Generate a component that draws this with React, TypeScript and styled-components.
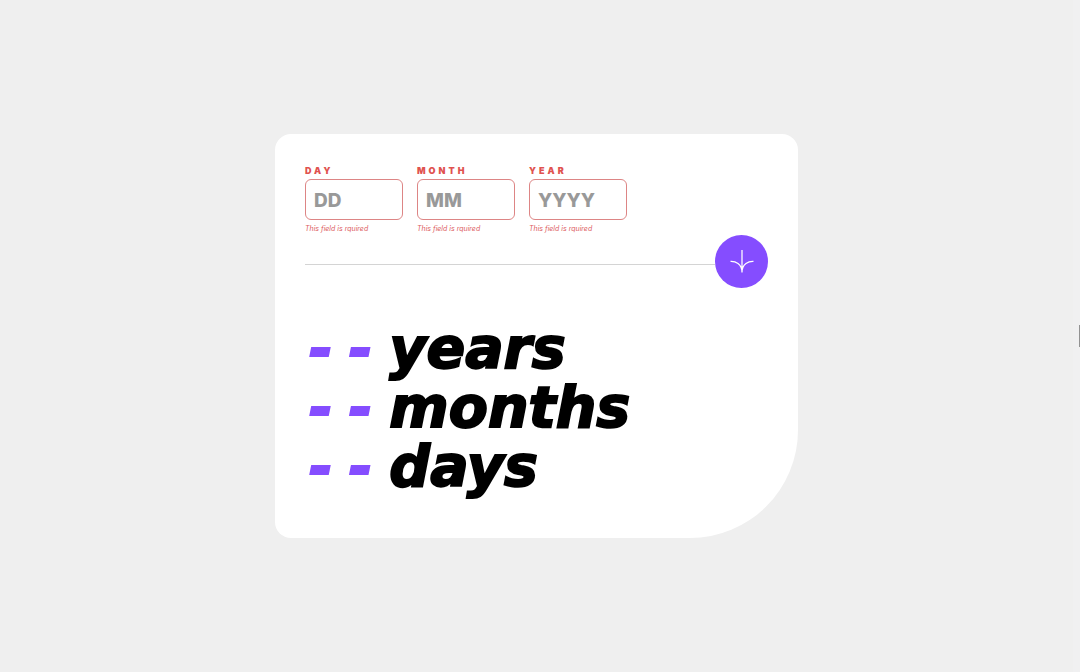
import React from "react";
import styled, { createGlobalStyle } from "styled-components";

const GlobalStyle = createGlobalStyle`
  *, *::before, *::after { box-sizing: border-box; }
  body { margin: 0; background: #efefef; }
`;

const sans = `Inter, "Liberation Sans", sans-serif`;
const display = `"DejaVu Sans", "Arial Black", sans-serif`;

const Page = styled.main`
  display: flex;
  min-height: 100vh;
  align-items: center;
  font-family: ${sans};
`;

const Stage = styled.div`
  flex: 1;
  display: flex;
  justify-content: center;
`;

const SideRail = styled.aside`
  align-self: stretch;
  width: 7px;
  display: flex;
  align-items: center;
  justify-content: flex-end;
  background: #f0f0f1;
`;

const RailHandle = styled.span`
  width: 1px;
  height: 22px;
  background: #929292;
`;

const Card = styled.section`
  width: 523px;
  max-width: 100%;
  padding: 30px 30px 42px;
  background: #fff;
  border-radius: 16px 16px 108px 16px;
`;

const Fields = styled.div`
  display: flex;
  gap: 14px;
`;

const Field = styled.div`
  display: flex;
  flex-direction: column;
  width: 98px;
`;

const Label = styled.label`
  margin-bottom: 2px;
  font: 900 9px/13px ${sans};
  letter-spacing: 3px;
  color: #e0524f;
`;

const Input = styled.input`
  width: 100%;
  height: 41px;
  padding: 2px 8px 0;
  border: 1px solid #dd8585;
  border-radius: 6px;
  background: #fff;
  font: 800 19px/24px ${sans};
  color: #000;
  outline: none;
  &::placeholder { color: #999; opacity: 1; }
`;

const ErrorText = styled.small`
  margin-top: 4px;
  font: italic 7px/10px ${sans};
  color: #dc5a5e;
`;

const Divider = styled.div`
  display: flex;
  align-items: center;
  margin-top: 1px;
`;

const Line = styled.hr`
  flex: 1;
  margin: 6px 0 0;
  border: 0;
  border-top: 1px solid #d4d4d4;
`;

const Submit = styled.button`
  display: grid;
  place-items: center;
  width: 53px;
  height: 53px;
  padding: 0;
  border: 0;
  border-radius: 50%;
  background: #854dff;
  cursor: pointer;
`;

const Results = styled.div`
  margin-top: 31px;
`;

const Result = styled.p`
  display: flex;
  gap: 17px;
  margin: 0;
  font: italic 700 57px/59px ${display};
  color: #000;
  -webkit-text-stroke: 2px currentColor;
`;

const Value = styled.span`
  display: flex;
  gap: 16px;
  padding-left: 4px;
  color: #854dff;
`;

const fields = [
  { id: "day", label: "DAY", hint: "DD" },
  { id: "month", label: "MONTH", hint: "MM" },
  { id: "year", label: "YEAR", hint: "YYYY" },
];

export default function App() {
  return (
    <Page>
      <GlobalStyle />
      <Stage>
        <Card>
          <Fields>
            {fields.map((f) => (
              <Field key={f.id}>
                <Label htmlFor={f.id}>{f.label}</Label>
                <Input id={f.id} placeholder={f.hint} aria-describedby={`${f.id}-error`} />
                <ErrorText id={`${f.id}-error`}>This field is rquired</ErrorText>
              </Field>
            ))}
          </Fields>
          <Divider>
            <Line />
            <Submit aria-label="Calculate age">
              <svg width="24" height="24" viewBox="0 0 46 46" fill="none" stroke="#fff" strokeWidth="2.4">
                <path d="M1 22C10 21.600 23 26 23 43M23 43V0M45 22C36 21.600 23 26 23 43" />
              </svg>
            </Submit>
          </Divider>
          <Results>
            {["years", "months", "days"].map((unit) => (
              <Result key={unit}>
                <Value>
                  <span>-</span>
                  <span>-</span>
                </Value>
                <span>{unit}</span>
              </Result>
            ))}
          </Results>
        </Card>
      </Stage>
      <SideRail>
        <RailHandle />
      </SideRail>
    </Page>
  );
}
